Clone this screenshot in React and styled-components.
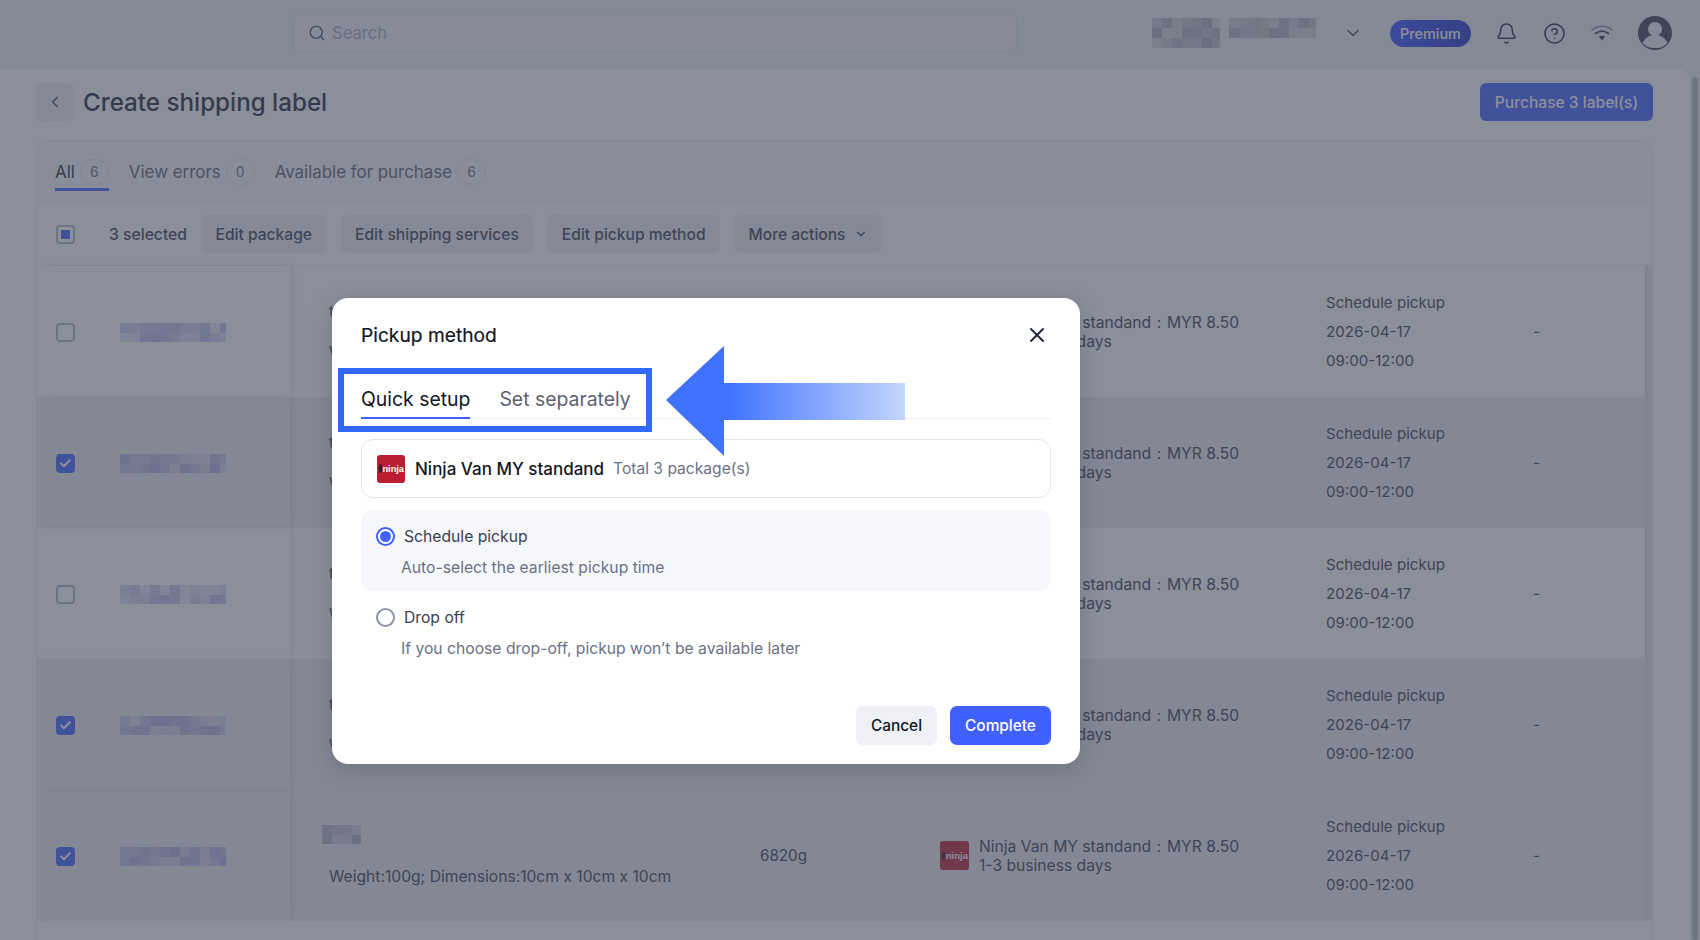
import React from 'react';
import styled, { createGlobalStyle } from 'styled-components';
import { Search, ChevronDown, ChevronLeft, Bell, CircleHelp, X, Check } from 'lucide-react';

const GlobalStyle = createGlobalStyle`
html, body {
  margin: 0;
  padding: 0;
  width: 1700px;
  height: 940px;
  overflow: hidden;
  font-family: Inter, "Noto Sans", sans-serif;
  background: #f0f1f4;
}
* { box-sizing: border-box; }
`;

const Page = styled.div`
position: relative;
width: 1700px;
height: 940px;
overflow: hidden;
display: flex;
flex-direction: column;
background: #eef1f3;
color: #23283a;
`;

const TopBar = styled.header`
height: 69px;
flex: none;
display: flex;
align-items: center;
padding: 0 0 3px 293px;
color: #23283a;
`;

const SearchBox = styled.div`
width: 724px;
height: 38px;
border: 1px solid #dfe2ea;
border-radius: 6px;
background: #f3f4f7;
display: flex;
align-items: center;
gap: 6px;
padding-left: 14px;
color: #a6abb9;
font-size: 16.6px;
`;

const Account = styled.div`
margin-left: 135px;
width: 164px;
display: flex;
gap: 9px;
`;

const TopChevron = styled.span`
margin-left: 27px;
display: flex;
color: #3b4052;
`;

const PremiumPill = styled.span`
margin-left: 27px;
width: 81px;
height: 27px;
border-radius: 14px;
background: linear-gradient(90deg, #3550ff, #2436c8);
color: #fff;
font-size: 14.400px;
font-weight: 500;
display: flex;
align-items: center;
justify-content: center;
`;

const TopIcon = styled.span`
width: 48px;
display: flex;
justify-content: center;
color: #23283a;
margin-left: ${p => p.$first ? '11px' : '0'};
`;

const AvatarSlot = styled(TopIcon)`
margin-left: 5px;
`;

const Body = styled.div`
flex: 1;
display: flex;
min-height: 0;
`;

const Main = styled.main`
flex: 1;
background: #fff;
border-top-right-radius: 14px;
padding: 14px 37px 0 36px;
overflow: hidden;
`;

const ScrollTrack = styled.div`
width: 10px;
flex: none;
padding: 8px 2px 0 2px;
`;

const ScrollThumb = styled.div`
height: 100%;
border-radius: 3px;
background: #b9bcc4;
`;

const PageHead = styled.div`
display: flex;
align-items: center;
`;

const BackButton = styled.button`
width: 38px;
height: 38px;
border: none;
border-radius: 6px;
background: #eff0f4;
color: #3b4052;
display: flex;
align-items: center;
justify-content: center;
padding: 0;
`;

const PageTitle = styled.h1`
margin: 0 0 0 9px;
font-size: 24.200px;
font-weight: 500;
color: #23283a;
flex: 1;
`;

const PurchaseButton = styled.button`
width: 173px;
height: 38px;
border: none;
border-radius: 6px;
background: #4060ff;
color: #fff;
font: 500 15.6px Inter, sans-serif;
`;

const Card = styled.section`
margin-top: 19px;
border: 1px solid #e8eaef;
border-bottom: none;
border-radius: 12px 12px 0 0;
`;

const TabRow = styled.div`
height: 61px;
display: flex;
align-items: flex-end;
gap: 20px;
padding-left: 18px;
background: #fafafc;
border-radius: 12px 12px 0 0;
border-bottom: 1px solid #eceef2;
`;

const TabItem = styled.div`
height: 50px;
padding-top: 18px;
display: flex;
align-items: flex-start;
gap: 5px;
font-size: 16.9px;
line-height: 26px;
color: ${p => p.$active ? '#23283a' : '#5c6274'};
border-bottom: 3px solid ${p => p.$active ? '#4060ff' : 'transparent'};
margin-bottom: 10px;
`;

const CountPill = styled.span`
min-width: 29px;
height: 26px;
border: 1px solid #e2e4ea;
border-radius: 13px;
font-size: 14px;
line-height: 24px;
text-align: center;
color: #6b7185;
`;

const Toolbar = styled.div`
height: 64px;
display: flex;
align-items: center;
padding: 1px 0 0 19px;
border-bottom: 1px solid #eceef2;
`;

const SelectedText = styled.span`
margin-left: 34px;
margin-right: 14px;
font-size: 15.7px;
font-weight: 500;
color: #3b4052;
`;

const ToolButton = styled.button`
height: 38px;
padding: 0 14.500px;
margin-right: 14px;
border: none;
border-radius: 6px;
background: #eff0f4;
color: #3b4052;
font: 500 15.6px Inter, sans-serif;
display: flex;
align-items: center;
gap: 8px;
`;

const Box = styled.span`
width: 19px;
height: 19px;
flex: none;
border-radius: 4px;
border: 2px solid ${p => p.$checked ? '#4060ff' : '#b3b7c6'};
background: ${p => p.$checked ? '#4060ff' : '#fff'};
color: #fff;
display: flex;
align-items: center;
justify-content: center;
`;

const BoxDot = styled.span`
width: 9px;
height: 9px;
border-radius: 1px;
background: #4060ff;
`;

const Row = styled.div`
height: 131px;
display: grid;
grid-template-columns: 253px 470px 180px 386px 207px 112px 7px;
align-items: center;
background: ${p => p.$selected ? '#eeecf1' : '#fff'};
`;

const FixedCell = styled.div`
height: 100%;
display: flex;
align-items: center;
padding: 1px 0 0 19px;
gap: 45px;
box-shadow: 5px 0 9px -3px rgba(30, 35, 60, 0.16);
`;

const ProductCell = styled.div`
padding-left: 39px;
display: flex;
flex-direction: column;
gap: 20px;
font-size: 15.64px;
line-height: 21px;
color: #3b4052;
`;

const Dim = styled.div`
height: 21px;
margin-left: ${p => p.$shift ? '-7px' : '0'};
`;

const PlainCell = styled.div`
font-size: 15.2px;
color: #3b4052;
`;

const CarrierCell = styled.div`
display: flex;
align-items: center;
gap: 10px;
font-size: 15.65px;
line-height: 19px;
color: #3b4052;
white-space: nowrap;
`;

const PickupCell = styled.div`
font-size: 15.1px;
line-height: 29px;
color: #3b4052;
`;

const EdgeShade = styled.div`
height: 100%;
background: linear-gradient(90deg, #dcdde2, #eceded);
`;

const Backdrop = styled.div`
position: absolute;
inset: 0;
background: rgba(66, 72, 90, 0.61);
`;

const Modal = styled.div`
position: absolute;
left: 332px;
top: 298px;
width: 748px;
height: 466px;
border-radius: 16px;
background: #fff;
padding: 23px 29px 19px 29px;
box-shadow: 0 6px 24px rgba(20, 24, 40, 0.18);
color: #14171f;
`;

const ModalHead = styled.div`
display: flex;
align-items: center;
justify-content: space-between;
height: 28px;
padding-right: 2px;
`;

const ModalTitle = styled.h2`
margin: 0;
font-size: 19.2px;
font-weight: 400;
-webkit-text-stroke: 0.2px #14171f;
`;

const CloseIcon = styled.span`
display: flex;
color: #23283a;
`;

const ModalTabs = styled.div`
margin-top: 32px;
height: 38px;
display: flex;
gap: 29px;
border-bottom: 1px solid #eff0f4;
`;

const ModalTab = styled.div`
height: 38px;
font-size: 19.4px;
line-height: 36px;
color: ${p => p.$active ? '#14171f' : '#5c6274'};
border-bottom: 2px solid ${p => p.$active ? '#4060ff' : 'transparent'};
`;

const CarrierBox = styled.div`
margin-top: 20px;
height: 59px;
border: 1px solid #e3e5ec;
border-radius: 12px;
display: flex;
align-items: center;
padding-left: 15px;
`;

const CarrierName = styled.span`
margin-left: 10px;
font-size: 17px;
font-weight: 500;
color: #14171f;
`;

const CarrierTotal = styled.span`
margin-left: 9px;
font-size: 15.6px;
color: #6b7185;
`;

const Logo = styled.span`
width: ${p => p.$size}px;
height: ${p => p.$size}px;
flex: none;
border-radius: 3px;
background: #bb1e33;
color: #fff;
display: flex;
align-items: center;
justify-content: space-between;
padding: 0 1px 0 2px;
font: 700 ${p => p.$size * 0.33}px "Liberation Sans", sans-serif;
&::before {
  content: '';
  width: 3px;
  height: 9px;
  border-radius: 2px;
  background: #3a1a22;
}
`;

const Option = styled.div`
height: 81px;
margin-top: ${p => p.$first ? '12px' : '0'};
border-radius: 12px;
background: ${p => p.$active ? '#f6f7fb' : 'transparent'};
padding: 14px 0 0 15px;
`;

const OptionLine = styled.div`
display: flex;
align-items: center;
gap: 9px;
height: 25px;
font-size: 15.7px;
color: #3b4052;
`;

const Radio = styled.span`
width: 19px;
height: 19px;
flex: none;
border-radius: 50%;
border: 2px solid ${p => p.$on ? '#4060ff' : '#8e93a8'};
background: #fff;
display: flex;
align-items: center;
justify-content: center;
&::after {
  content: '';
  width: 11px;
  height: 11px;
  border-radius: 50%;
  background: ${p => p.$on ? '#4060ff' : 'transparent'};
}
`;

const OptionDesc = styled.div`
margin-top: 6px;
margin-left: 25px;
font-size: 15.7px;
line-height: 26px;
color: #6b7185;
`;

const ModalFoot = styled.div`
margin-top: 34px;
display: flex;
justify-content: flex-end;
gap: 13px;
`;

const FootButton = styled.button`
height: 39px;
width: ${p => p.$primary ? '101px' : '81px'};
border: none;
border-radius: 7px;
background: ${p => p.$primary ? '#4060ff' : '#f0f1f6'};
color: ${p => p.$primary ? '#fff' : '#14171f'};
font: 500 15.4px Inter, sans-serif;
`;

const Highlight = styled.div`
position: absolute;
left: 6px;
top: 70px;
width: 314px;
height: 64px;
border: 6px solid #3169ff;
`;

const ArrowWrap = styled.svg`
position: absolute;
left: 334px;
top: 48px;
filter: blur(0.5px);
`;

const MosaicSvg = styled.svg`
display: block;
flex: none;
filter: blur(0.6px);
`;

const rows = [
  { selected: false, title: 't' },
  { selected: true, title: 't' },
  { selected: false, title: 't' },
  { selected: true, title: 't' },
  { selected: true, blur: true },
];

// pixelated blocks standing in for the blurred-out text in the screenshot
const Mosaic = ({ width, height, cell, seed, color }) => {
  const cols = Math.ceil(width / cell);
  const lines = Math.ceil(height / cell);
  const cells = [];
  for (let y = 0; y < lines; y++) {
    for (let x = 0; x < cols; x++) {
      const v = Math.abs(Math.sin((x + 1) * 12.9 + (y + 1) * 78.2 + seed) * 437.5) % 1;
      cells.push(<rect key={x + '-' + y} x={x * cell} y={y * cell} width={cell} height={cell} fill={color} opacity={0.12 + v * 0.3} />);
    }
  }
  return <MosaicSvg width={width} height={height}>{cells}</MosaicSvg>;
};

const WifiIcon = () => (
  <svg width="26" height="26" viewBox="0 0 26 26" fill="none" strokeLinecap="round">
    <path d="M3 10c5.600-5 14.400-5 20 0" stroke="#8a8f9c" strokeWidth="1.600" />
    <path d="M6.500 13.500c3.700-3.200 9.300-3.200 13 0" stroke="#3b4052" strokeWidth="1.800" />
    <path d="M9.800 16.800c1.900-1.500 4.500-1.500 6.400 0L13 20.500z" fill="#3b4052" />
  </svg>
);

const AvatarIcon = () => (
  <svg width="34" height="34" viewBox="0 0 34 34">
    <circle cx="17" cy="17" r="17" fill="#3b4052" />
    <circle cx="17" cy="13" r="7" fill="#eef1f3" />
    <path d="M4.500 27c2.500-5.500 7-8 12.500-8s10 2.500 12.500 8A15 15 0 0 1 17 32 15 15 0 0 1 4.500 27z" fill="#eef1f3" />
  </svg>
);

const Arrow = () => (
  <ArrowWrap width="245" height="114" viewBox="0 0 245 114">
    <defs>
      <linearGradient id="arrowFade" x1="0" x2="1" y1="0" y2="0">
        <stop offset="0" stopColor="#3e72ff" />
        <stop offset="0.25" stopColor="#3e72ff" />
        <stop offset="1" stopColor="#c4d6fb" />
      </linearGradient>
    </defs>
    <path d="M0 54L58 0V37H239V74H58V110z" fill="url(#arrowFade)" />
  </ArrowWrap>
);

const NinjaLogo = ({ size }) => <Logo $size={size}>ninja</Logo>;

const App = () => (
  <Page>
    <GlobalStyle />
    <TopBar>
      <SearchBox>
        <Search size={18} strokeWidth={1.6} color="#3b4052" />
        Search
      </SearchBox>
      <Account>
        <Mosaic width={68} height={30} cell={10} seed={3} color="#4a4f5e" />
        <Mosaic width={87} height={20} cell={10} seed={8} color="#4a4f5e" />
      </Account>
      <TopChevron><ChevronDown size={20} strokeWidth={1.6} /></TopChevron>
      <PremiumPill>Premium</PremiumPill>
      <TopIcon $first><Bell size={23} strokeWidth={1.6} /></TopIcon>
      <TopIcon><CircleHelp size={23} strokeWidth={1.6} /></TopIcon>
      <TopIcon><WifiIcon /></TopIcon>
      <AvatarSlot><AvatarIcon /></AvatarSlot>
    </TopBar>
    <Body>
      <Main>
        <PageHead>
          <BackButton><ChevronLeft size={18} strokeWidth={1.6} /></BackButton>
          <PageTitle>Create shipping label</PageTitle>
          <PurchaseButton>Purchase 3 label(s)</PurchaseButton>
        </PageHead>
        <Card>
          <TabRow>
            <TabItem $active>All <CountPill>6</CountPill></TabItem>
            <TabItem>View errors <CountPill>0</CountPill></TabItem>
            <TabItem>Available for purchase <CountPill>6</CountPill></TabItem>
          </TabRow>
          <Toolbar>
            <Box><BoxDot /></Box>
            <SelectedText>3 selected</SelectedText>
            <ToolButton>Edit package</ToolButton>
            <ToolButton>Edit shipping services</ToolButton>
            <ToolButton>Edit pickup method</ToolButton>
            <ToolButton>More actions <ChevronDown size={14} strokeWidth={2} /></ToolButton>
          </Toolbar>
          {rows.map((row, index) => (
            <Row key={index} $selected={row.selected}>
              <FixedCell>
                <Box $checked={row.selected}>{row.selected && <Check size={13} strokeWidth={4} />}</Box>
                <Mosaic width={106} height={19} cell={10} seed={index * 5 + 1} color="#5562c8" />
              </FixedCell>
              <ProductCell>
                <Dim $shift={row.blur}>
                  {row.blur ? <Mosaic width={39} height={19} cell={10} seed={9} color="#4a4f5e" /> : row.title}
                </Dim>
                <div>Weight:100g; Dimensions:10cm x 10cm x 10cm</div>
              </ProductCell>
              <PlainCell>6820g</PlainCell>
              <CarrierCell>
                <NinjaLogo size={29} />
                <div>Ninja Van MY standand：MYR 8.50<br />1-3 business days</div>
              </CarrierCell>
              <PickupCell>Schedule pickup<br />2026-04-17<br />09:00-12:00</PickupCell>
              <PlainCell>-</PlainCell>
              <EdgeShade />
            </Row>
          ))}
          <Row />
        </Card>
      </Main>
      <ScrollTrack><ScrollThumb /></ScrollTrack>
    </Body>
    <Backdrop />
    <Modal>
      <ModalHead>
        <ModalTitle>Pickup method</ModalTitle>
        <CloseIcon><X size={24} strokeWidth={2} /></CloseIcon>
      </ModalHead>
      <ModalTabs>
        <ModalTab $active>Quick setup</ModalTab>
        <ModalTab>Set separately</ModalTab>
      </ModalTabs>
      <CarrierBox>
        <NinjaLogo size={28} />
        <CarrierName>Ninja Van MY standand</CarrierName>
        <CarrierTotal>Total 3 package(s)</CarrierTotal>
      </CarrierBox>
      <Option $first $active>
        <OptionLine><Radio $on />Schedule pickup</OptionLine>
        <OptionDesc>Auto-select the earliest pickup time</OptionDesc>
      </Option>
      <Option>
        <OptionLine><Radio />Drop off</OptionLine>
        <OptionDesc>If you choose drop-off, pickup won’t be available later</OptionDesc>
      </Option>
      <ModalFoot>
        <FootButton>Cancel</FootButton>
        <FootButton $primary>Complete</FootButton>
      </ModalFoot>
      <Highlight />
      <Arrow />
    </Modal>
  </Page>
);

export default App;
